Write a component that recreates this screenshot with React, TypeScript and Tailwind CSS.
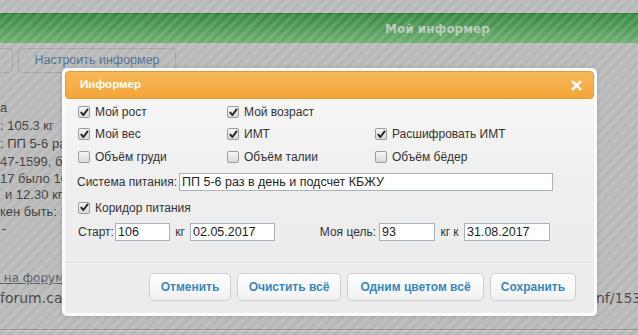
import React from "react";

function Box({ checked }: { checked: boolean }) {
  return (
    <span className="w-[12px] h-[12px] rounded-[2px] border border-[#9c9c9c] bg-linear-to-b from-[#f6f6f6] to-[#d9d9d9] flex items-center justify-center shrink-0">
      {checked && (
        <svg width="9" height="9" viewBox="0 0 9 9">
          <path d="M1.3 4.6 L3.4 7 L7.6 1.4" stroke="#262626" strokeWidth="1.9" fill="none" strokeLinecap="round" strokeLinejoin="round" />
        </svg>
      )}
    </span>
  );
}

function Check({ checked, label, w }: { checked: boolean; label: string; w?: string }) {
  return (
    <div className={`flex items-center gap-[5px] ${w ?? ""}`}>
      <Box checked={checked} />
      <span>{label}</span>
    </div>
  );
}

function Field({ value, w }: { value: string; w: string }) {
  return (
    <div className={`${w} h-[18px] bg-white border border-[#a9b1bb] flex items-center px-[2px] text-[12.5px] text-[#1e1e1e] leading-none`}>
      {value}
    </div>
  );
}

function Btn({ label, w }: { label: string; w: string }) {
  return (
    <div className={`${w} h-[28px] rounded-[5px] border border-[#cfcfcf] bg-linear-to-b from-white to-[#f1f1f1] flex items-center justify-center font-bold text-[12px] text-[#3b87bd]`}>
      {label}
    </div>
  );
}

const lines: { t: string; h: string; pl?: string }[] = [
  { t: "а", h: "h-[18px]" },
  { t: ": 105.3 кг", h: "h-[18px]" },
  { t: ": ПП 5-6 раз", h: "h-[18px]" },
  { t: "47-1599, бел", h: "h-[18px]" },
  { t: "17 было 106", h: "h-[15px]" },
  { t: "и 12.30 кг", h: "h-[17px]", pl: "pl-[5px]" },
  { t: "кен быть: 1", h: "h-[18px]" },
  { t: "-", h: "h-[15px]", pl: "pl-[2px]" },
];

export default function App() {
  return (
    <div className="relative w-[638px] h-[335px] overflow-hidden bg-[#b8b8b8] font-['Liberation_Sans',Arial,sans-serif]">
      <div className="flex flex-col">
        <div className="h-[13px]" />
        <div className="h-[30px] bg-linear-to-b from-[#388942] to-[#6daf71] flex items-center border-t border-[#2f7a38]">
          <span className="ml-[385px] font-['DejaVu_Sans',sans-serif] font-bold text-[12px] text-[#b9c8b9]">Мой информер</span>
        </div>
        <div className="flex gap-[5px] mt-[5px] h-[25px]">
          <div className="w-[25px] -ml-[12px] border border-[#a2a2a2] rounded-[4px]" />
          <div className="w-[158px] border border-[#a2a2a2] rounded-[4px] flex items-center justify-center text-[12.5px] text-[#4a6e8c]">
            Настроить информер
          </div>
        </div>
        <div className="mt-[26px] flex flex-col text-[13px] text-[#3a3a3a] whitespace-nowrap">
          {lines.map((l, i) => (
            <div key={i} className={`${l.h} ${l.pl ?? ""} flex items-center`}>
              {l.t}
            </div>
          ))}
        </div>
        <div className="mt-[34px] h-[16px] flex items-center font-['DejaVu_Sans',sans-serif] text-[12px] text-[#5a5a5a] whitespace-nowrap">
          <span className="underline">{"\u00a0на форумы"}</span>
        </div>
        <div className="mt-[2px] h-[20px] flex items-center font-['DejaVu_Sans',sans-serif] text-[14px] text-[#444] whitespace-nowrap">
          <span className="w-[596px] shrink-0 overflow-hidden">forum.cafe/threads/</span>
          <span>nf/153</span>
        </div>
        <div className="mt-[21px] h-[1px] bg-[#8f8f8f]" />
        <div className="h-[1px] bg-[#c8c8c8]" />
      </div>

      <div className="pointer-events-none absolute inset-0 bg-[image:repeating-linear-gradient(135deg,rgba(255,255,255,0.11)_0px,rgba(255,255,255,0.11)_3.6px,rgba(0,0,0,0)_3.6px,rgba(0,0,0,0)_7.2px)]" />

      <div className="absolute left-[62px] top-[68px] w-[535px] h-[248px] rounded-[5px] bg-[#fbfbfb] p-[3px] shadow-[0_0_4px_rgba(0,0,0,0.15)]">
        <div className="h-full flex flex-col rounded-[4px] bg-linear-to-b from-[#f8f8f8] via-[#eeeeee] to-[#ececec]">
          <div className="h-[28px] shrink-0 rounded-[4px] border border-[#e39a33] bg-linear-to-b from-[#f8b857] to-[#f3a63a] flex items-center justify-between pl-[14px] pr-[11px]">
            <span className="font-bold text-[11.5px] text-white">Информер</span>
            <svg width="11" height="11" viewBox="0 0 11 11">
              <path d="M1.8 1.8 L9.2 9.2 M9.2 1.8 L1.8 9.2" stroke="white" strokeWidth="2.6" strokeLinecap="round" />
            </svg>
          </div>

          <div className="flex flex-col pl-[13px] text-[12px] text-[#333] whitespace-nowrap">
            <div className="h-[22px] mt-[2px] flex items-center">
              <Check checked label="Мой рост" w="w-[149px]" />
              <Check checked label="Мой возраст" w="w-[148px]" />
            </div>
            <div className="h-[22px] flex items-center">
              <Check checked label="Мой вес" w="w-[149px]" />
              <Check checked label="ИМТ" w="w-[148px]" />
              <Check checked label="Расшифровать ИМТ" />
            </div>
            <div className="h-[24px] flex items-center">
              <Check checked={false} label="Объём груди" w="w-[149px]" />
              <Check checked={false} label="Объём талии" w="w-[148px]" />
              <Check checked={false} label="Объём бёдер" />
            </div>
            <div className="h-[26px] flex items-center">
              <span className="w-[102px] -ml-[1px]">Система питания:</span>
              <Field value="ПП 5-6 раз в день и подсчет КБЖУ" w="w-[374px]" />
            </div>
            <div className="h-[25px] flex items-center">
              <Check checked label="Коридор питания" />
            </div>
            <div className="h-[24px] flex items-center">
              <span className="w-[37px]">Старт:</span>
              <Field value="106" w="w-[55px]" />
              <span className="w-[20px] text-center">кг</span>
              <Field value="02.05.2017" w="w-[85px]" />
              <span className="w-[104px] text-right pr-[3px]">Моя цель:</span>
              <Field value="93" w="w-[56px]" />
              <span className="w-[29px] text-center">кг к</span>
              <Field value="31.08.2017" w="w-[86px]" />
            </div>
          </div>

          <div className="mt-[18px] h-[1px] bg-[#d9d9d9]" />
          <div className="h-[1px] bg-[#f8f8f8]" />
          <div className="mt-[9px] flex justify-end gap-[6px] pr-[18px]">
            <Btn label="Отменить" w="w-[82px]" />
            <Btn label="Очистить всё" w="w-[104px]" />
            <Btn label="Одним цветом всё" w="w-[137px]" />
            <Btn label="Сохранить" w="w-[86px]" />
          </div>
        </div>
      </div>
    </div>
  );
}
